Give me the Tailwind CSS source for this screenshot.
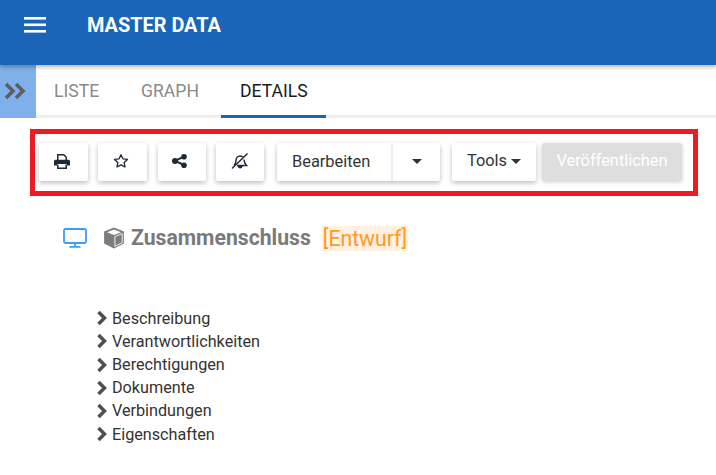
<!DOCTYPE html>
<html lang="de">
<head>
    <meta charset="UTF-8">
    <title>Master Data</title>
    <script src="https://cdn.jsdelivr.net/npm/@tailwindcss/browser@4"></script>
</head>
<body class="bg-white font-['Roboto',sans-serif] w-[716px] h-[475px] overflow-hidden">
    <header class="relative z-10 h-[65px] bg-[#1a65b8] flex items-start shadow-[0_2px_4px_rgba(0,0,0,0.3)]">
        <svg class="ml-[24px] mt-[17px]" width="22" height="16" viewBox="0 0 22 16" fill="#fff">
            <rect y="0" width="22" height="2.6"/><rect y="6.5" width="22" height="2.6"/><rect y="13" width="22" height="2.6"/>
        </svg>
        <h1 class="ml-[41px] mt-[14px] text-[19.9px] leading-[24px] font-bold text-white">MASTER DATA</h1>
    </header>

    <nav class="flex h-[53px]">
        <div class="w-[36px] bg-[#7fb0ea] flex items-center justify-start pl-[4px] pb-[2px]">
            <svg width="24" height="18" viewBox="0 0 24 18" fill="none" stroke="#5f5f5f" stroke-width="3.600">
                <path d="M2 2l7 7-7 7M12 2l7 7-7 7"/>
            </svg>
        </div>
        <div class="flex-1 flex border-b-[3px] border-[#eeeeee] text-[17.6px] leading-[52px]">
            <a class="w-[85px] pl-[18px] text-[#8a8a8a]">LISTE</a>
            <a class="w-[100px] pl-[20px] text-[#8a8a8a]">GRAPH</a>
            <a class="w-[105px] h-[53px] pl-[19px] text-[#1a1a1a] border-b-[3px] border-[#1a65b8]">DETAILS</a>
        </div>
    </nav>

    <div class="ml-[30px] mt-[11px] w-[668px] h-[67px] border-[5px] border-[#ed1c24] flex items-center pl-[4px] pb-[2px] text-[16.4px] text-[#333333]">
        <button class="w-[49px] h-[38px] pl-[15px] bg-white rounded-[2px] shadow-[0_2px_5px_rgba(0,0,0,0.26)] flex items-center">
            <svg class="-mt-[2px]" width="16" height="16" viewBox="0 0 16 16" fill="#1f2a38"><path d="M3.800 7.500V1.800h6l2.400 2.400v3.300" fill="none" stroke="#1f2a38" stroke-width="1.500"/><path d="M1.500 6.700h13c.8 0 1.500.7 1.500 1.500v4.300h-3V11H3v1.500H0V8.200c0-.8.7-1.500 1.500-1.500z"/><path d="M3.800 11.500v3.700h8.400v-3.700" fill="none" stroke="#1f2a38" stroke-width="1.500"/></svg>
        </button>
        <button class="ml-[10px] w-[49px] h-[38px] pl-[15px] bg-white rounded-[2px] shadow-[0_2px_5px_rgba(0,0,0,0.26)] flex items-center">
            <svg class="-mt-[2px]" width="16" height="16" viewBox="0 0 24 24" fill="none" stroke="#1f2a38" stroke-width="2" stroke-linejoin="round"><path d="M12 2.500l2.900 6.200 6.800.9-5 4.700 1.300 6.700-6-3.300-6 3.300 1.300-6.700-5-4.700 6.800-.9z"/></svg>
        </button>
        <button class="ml-[11px] w-[48px] h-[38px] pl-[14px] bg-white rounded-[2px] shadow-[0_2px_5px_rgba(0,0,0,0.26)] flex items-center">
            <svg class="-mt-[2px]" width="15" height="14" viewBox="0 0 15 14" fill="#1f2a38"><circle cx="3" cy="7" r="3"/><circle cx="12" cy="2.800" r="2.800"/><circle cx="12" cy="11.200" r="2.800"/><path d="M2.500 6l9-4.200.9 1.700-9 4.200zM3.400 5.900l9 4.200-.9 1.800-9-4.200z"/></svg>
        </button>
        <button class="ml-[10px] w-[48px] h-[38px] pl-[15px] bg-white rounded-[2px] shadow-[0_2px_5px_rgba(0,0,0,0.26)] flex items-center">
            <svg class="-mt-[2px]" width="18" height="18" viewBox="0 0 18 18" fill="none" stroke="#1f2a38" stroke-width="1.500"><path d="M1 16.500L16.500 1.500"/><path d="M3 13.500c1.200-1.200 2-2.600 2-5 0-2.400 1.800-4.500 4-4.500 1 0 1.900.4 2.600 1M13 7.500c0 2.800 1 4.500 2.500 6H6"/><path d="M7.500 14.500a1.800 1.800 0 0 0 3.400 0z" fill="#1f2a38"/></svg>
        </button>
        <div class="ml-[13px] w-[163px] h-[38px] bg-white rounded-[2px] shadow-[0_2px_5px_rgba(0,0,0,0.26)] flex items-center">
            <span class="w-[116px] pl-[15px] border-r-2 border-[#f0f0f0] leading-[38px]">Bearbeiten</span>
            <span class="flex-1 flex justify-center"><i class="w-0 h-0 border-x-[5px] border-x-transparent border-t-[5px] border-t-[#333333]"></i></span>
        </div>
        <button class="ml-[12px] w-[84px] h-[38px] bg-white rounded-[2px] shadow-[0_2px_5px_rgba(0,0,0,0.26)] flex items-center justify-center gap-[4px]">
            Tools <i class="w-0 h-0 border-x-[5px] border-x-transparent border-t-[5px] border-t-[#333333]"></i>
        </button>
        <button class="ml-[6px] w-[140px] h-[38px] bg-[#dedede] text-white rounded-[3px] shadow-[0_1px_4px_rgba(0,0,0,0.2)]">Veröffentlichen</button>
    </div>

    <section class="ml-[63px] mt-[27px] flex items-center h-[30px]">
        <svg width="24" height="20" viewBox="0 0 24 20" fill="none" stroke="#3f9bff" stroke-width="1.800"><rect x="1" y="1" width="22" height="14" rx="1.500"/><path d="M12 15v3.500M6.500 18.800h11"/></svg>
        <svg class="ml-[16px] -mr-[1px]" width="22" height="22" viewBox="0 0 20 20"><path d="M10 0.500L19 4v11l-9 4.500L1 15V4z" fill="#7c7c7c"/><path d="M10 2.200L16.500 4.700 10 7.300 3.500 4.700z" fill="#fff"/><path d="M10.800 8.700l6.700-2.700v8.200l-6.700 3.400z" fill="#7c7c7c" stroke="#fff" stroke-width="0.800"/></svg>
        <span class="ml-[7px] text-[21.2px] font-bold text-[#7a7a7a]">Zusammenschluss</span>
        <span class="ml-[11px] px-[1px] bg-[#fff0e0] text-[21.2px] leading-[25px] text-[#ff9a1f]">[Entwurf]</span>
    </section>

    <ul class="ml-[96px] mt-[53.5px] text-[16.2px] leading-[23.2px] text-[#333333]">
        <li class="flex items-center"><svg class="mr-[4px]" width="12" height="16" viewBox="0 0 12 16" fill="none" stroke="#4f4f4f" stroke-width="3.500"><path d="M2.500 2l6 6-6 6"/></svg>Beschreibung</li>
        <li class="flex items-center"><svg class="mr-[4px]" width="12" height="16" viewBox="0 0 12 16" fill="none" stroke="#4f4f4f" stroke-width="3.500"><path d="M2.500 2l6 6-6 6"/></svg>Verantwortlichkeiten</li>
        <li class="flex items-center"><svg class="mr-[4px]" width="12" height="16" viewBox="0 0 12 16" fill="none" stroke="#4f4f4f" stroke-width="3.500"><path d="M2.500 2l6 6-6 6"/></svg>Berechtigungen</li>
        <li class="flex items-center"><svg class="mr-[4px]" width="12" height="16" viewBox="0 0 12 16" fill="none" stroke="#4f4f4f" stroke-width="3.500"><path d="M2.500 2l6 6-6 6"/></svg>Dokumente</li>
        <li class="flex items-center"><svg class="mr-[4px]" width="12" height="16" viewBox="0 0 12 16" fill="none" stroke="#4f4f4f" stroke-width="3.500"><path d="M2.500 2l6 6-6 6"/></svg>Verbindungen</li>
        <li class="flex items-center"><svg class="mr-[4px]" width="12" height="16" viewBox="0 0 12 16" fill="none" stroke="#4f4f4f" stroke-width="3.500"><path d="M2.500 2l6 6-6 6"/></svg>Eigenschaften</li>
    </ul>
</body>
</html>
